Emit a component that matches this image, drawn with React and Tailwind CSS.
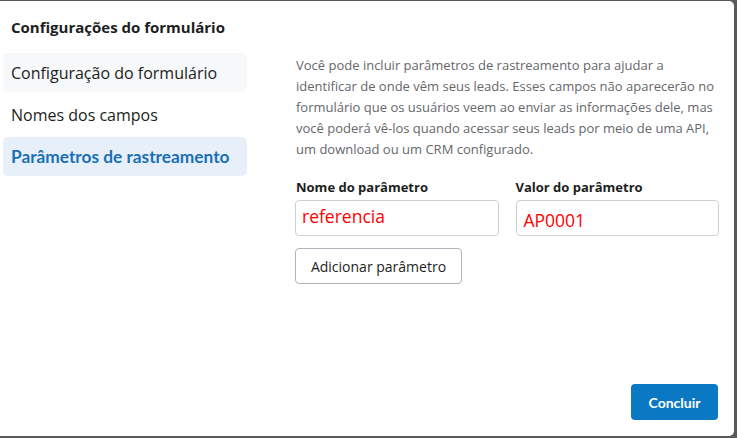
import React from "react";

export default function App() {
  return (
    <div className="w-[737px] h-[438px] bg-[#5a5a5a] pt-px pr-[3px] pb-[2px] overflow-hidden">
      <div
        className="w-full h-full bg-white rounded-r-[5px] flex flex-col"
        style={{ fontFamily: "'Open Sans', sans-serif" }}
      >
        <div className="pl-[11px] pt-[16px] h-[52px] text-[15px] font-bold text-[#1c1e21] leading-[20px]">
          Configurações do formulário
        </div>
        <div className="flex flex-1">
          <div className="w-[244px] ml-[3px] flex flex-col gap-[3px]">
            <div className="h-[39px] rounded-[5px] bg-[#f7f8fa] px-[8px] flex items-center text-[16px] text-[#1c1e21]">
              Configuração do formulário
            </div>
            <div className="h-[39px] rounded-[5px] px-[8px] flex items-center text-[16px] text-[#1c1e21]">
              Nomes dos campos
            </div>
            <div
              className="h-[39px] rounded-[5px] bg-[#e7f0f9] px-[8px] flex items-center whitespace-nowrap text-[17.3px] font-bold text-[#1a6fb5]"
              style={{ fontFamily: "Lato, sans-serif" }}
            >
              Parâmetros de rastreamento
            </div>
          </div>
          <div className="ml-[48px] w-[424px] pt-[2px]">
            <p className="text-[13px] leading-[21px] text-[#65676b] pl-px">
              Você pode incluir parâmetros de rastreamento para ajudar a identificar de onde vêm seus leads. Esses campos não aparecerão no formulário que os usuários veem ao enviar as informações dele, mas você poderá vê-los quando acessar seus leads por meio de uma API, um download ou um CRM configurado.
            </p>
            <div className="flex gap-[17px] mt-[18px]">
              <div className="w-[204px]">
                <div className="text-[13px] font-bold text-[#1c1e21] leading-[18px] h-[22px] pl-px">Nome do parâmetro</div>
                <div className="h-[36px] border border-[#ccd0d5] rounded-[4px] pl-[6px] pb-[3px] flex items-center text-[17.5px] text-[#ff0000]">
                  referencia
                </div>
              </div>
              <div className="w-[204px]">
                <div className="text-[13px] font-bold text-[#1c1e21] leading-[18px] h-[22px]">Valor do parâmetro</div>
                <div className="h-[36px] border border-[#ccd0d5] rounded-[4px] pl-[7px] pt-[4px] flex items-center text-[17.5px] text-[#ff0000]">
                  AP0001
                </div>
              </div>
            </div>
            <button className="mt-[12px] h-[36px] w-[167px] border border-[#b0b5bd] rounded-[4px] text-[14px] text-[#1c1e21] bg-white">
              Adicionar parâmetro
            </button>
          </div>
        </div>
        <div className="flex justify-end pr-[16px] pb-[16px]">
          <button
            className="h-[36px] w-[87px] rounded-[4px] bg-[#0a78c2] text-white text-[14px] font-bold"
            style={{ fontFamily: "Lato, sans-serif" }}
          >
            Concluir
          </button>
        </div>
      </div>
    </div>
  );
}
